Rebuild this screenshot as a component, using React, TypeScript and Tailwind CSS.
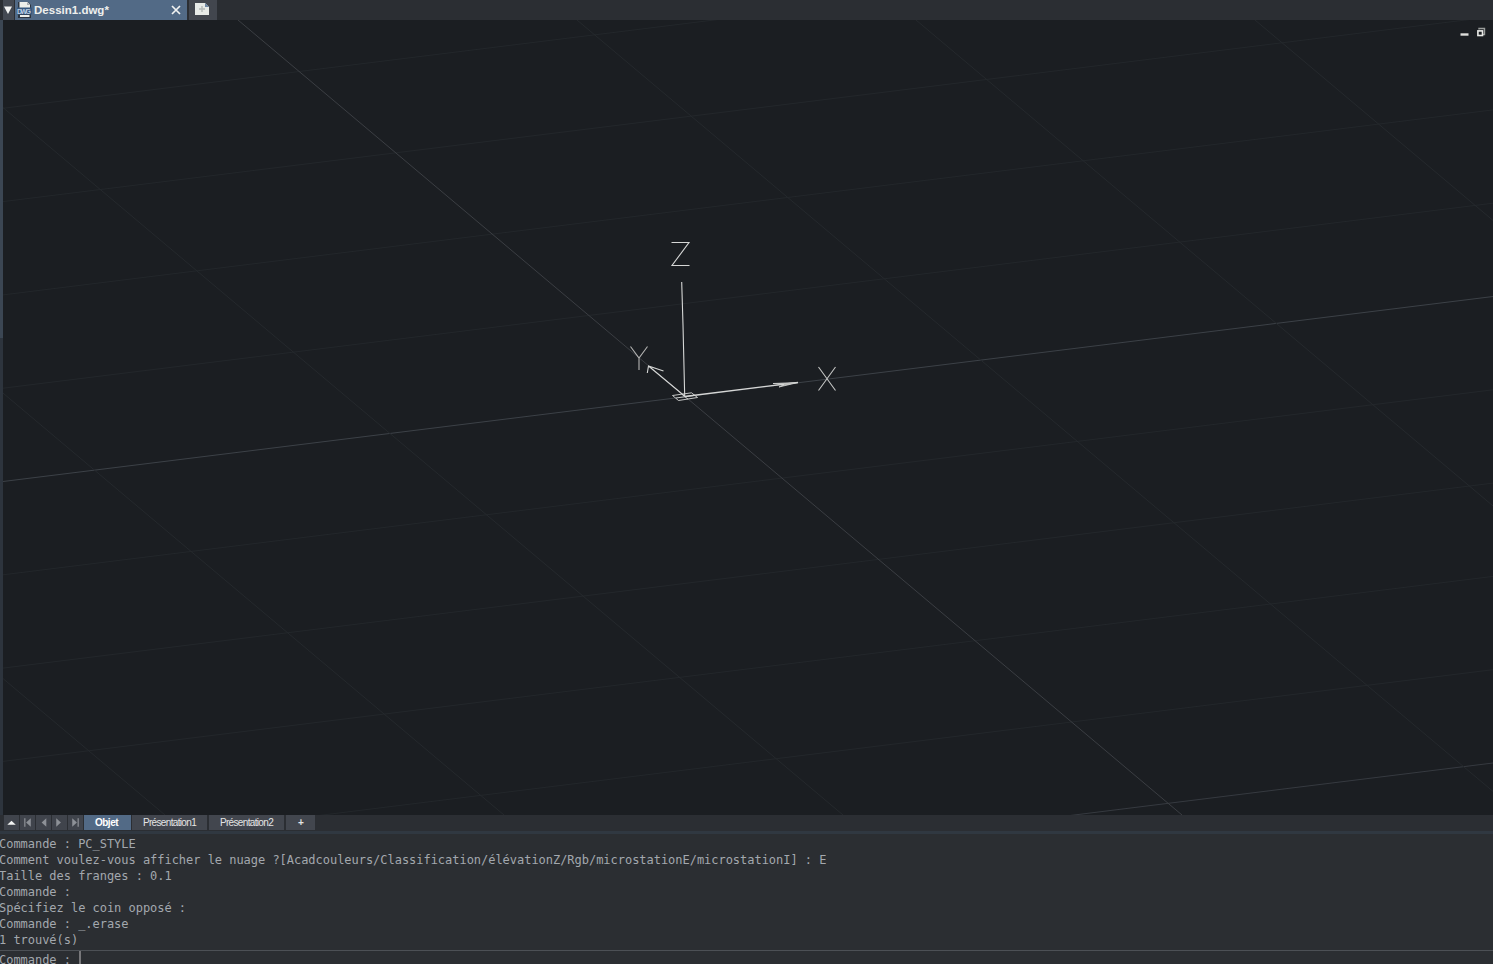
const VIEW_W = 1490;
const VIEW_H = 795;

// Grid rows: y at the left and at the right edge of the viewport.
const rows = [-6, -5, -4, -3, -2, -1, 0, 1, 2, 3, 4, 5].map((n) => ({
  n,
  y1: 461.5 + n * 93.3,
  y2: 276.5 + n * 93.3,
}));

// Grid columns: x at the top and at the bottom edge of the viewport.
const columns = [-3, -2, -1, 0, 1, 2, 3].map((n) => ({
  n,
  x1: 235 + n * 339,
  x2: 1179 + n * 339,
}));

function DrawingView() {
  return (
    <svg className="block h-[795px] w-[1490px] shrink-0 bg-[#1b1e22]" viewBox={`0 0 ${VIEW_W} ${VIEW_H}`} fill="none">
      {rows.map((r) => (
        <line key={r.n} x1={0} y1={r.y1} x2={VIEW_W} y2={r.y2} stroke={r.n === 0 ? '#3c4147' : r.n === 5 ? '#363a40' : '#23272b'} />
      ))}
      {columns.map((c) => (
        <line key={c.n} x1={c.x1} y1={0} x2={c.x2} y2={VIEW_H} stroke={c.n === 0 ? '#3b3e43' : '#25292d'} />
      ))}
      <g transform="translate(-3 -20)" stroke="#d6d7d6" strokeWidth="1.1">
        <path d="M671.5 242.5H689L672 265.5H689.5" />
        <path d="M630.5 346.5L639 358L647.5 346.5M639 358V370" stroke="#b3b3b2" />
        <path d="M818.5 367L835.5 390.5M835.5 367L818.5 390.5" stroke="#c4c5c4" />
        <path d="M681.7 282L683 325L684.7 396" />
        <path d="M684.5 396.5L798 382.5" strokeWidth="1.3" />
        <path d="M798 382.5L773 383.5L784 384.5L779 387Z" fill="#b8b9b8" strokeWidth=".8" />
        <path d="M684.5 396L648.5 366M663.5 371L648.5 366L647.3 373" />
        <path d="M672.5 395.5L691.5 392.8L697.5 397.5L678.5 400.5ZM676 398L695 395.3M682 394.3L688 399.2" strokeWidth=".9" />
      </g>
      <path d="M1457.5 14.5h8" stroke="#dedfdc" strokeWidth="2.4" />
      <path d="M1476 9.500v-1h5.500v6h-2" stroke="#9b9e9c" strokeWidth="1.4" />
      <rect x="1474.9" y="10.9" width="4.6" height="4.6" stroke="#e9eae7" strokeWidth="1.6" />
    </svg>
  );
}

function FileTabs() {
  return (
    <div className="flex h-[20px] w-full shrink-0 bg-[#2b2e33] pl-[3px]">
      <div className="flex w-[11px] items-center bg-[#444952] pl-px">
        <svg className="h-[8px] w-[8px]" viewBox="0 0 8 8">
          <path d="M0 .5h8L4 8z" fill="#f2f3f2" />
        </svg>
      </div>
      <div className="ml-px flex w-[172px] items-center bg-[#526a86]">
        <svg className="ml-px h-[18px] w-[17px]" viewBox="0 0 17 18">
          <path d="M2 1h10l3 3v13H2z" fill="#2d3540" />
          <path d="M3.500 1h8l2.500 2.500V7H3.500z" fill="#eceeea" />
          <path d="M4 14h9.500v2H4z" fill="#eceeea" />
          <path d="M11 1v3h3z" fill="#a9aeb3" />
          <rect x="1" y="6.5" width="15" height="7" fill="#37587f" />
          <text x="1" y="12.500" fontSize="7" fontWeight="700" fontFamily="Liberation Sans, sans-serif" fill="#b7cbe0" textLength="14">DWG</text>
        </svg>
        <span className="ml-px text-[11.5px] leading-[18px] font-bold tracking-[0.01px] whitespace-nowrap text-[#eeefed]">Dessin1.dwg*</span>
        <svg className="mr-[6px] ml-auto h-[10px] w-[10px]" viewBox="0 0 10 10">
          <path d="M1 1l8 8M9 1L1 9" stroke="#f2f3f2" strokeWidth="1.7" />
        </svg>
      </div>
      <div className="ml-[2px] flex w-[28px] items-center justify-center bg-[#42464e]">
        <svg className="mr-[3px] mb-[2px] h-[12px] w-[16px]" viewBox="0 0 16 12">
          <path d="M1 0h10l4 4v8H1z" fill="#e7eae7" />
          <path d="M11 0v4h4z" fill="#6d86a3" />
          <path d="M8 3v6M5 6h6" stroke="#b3b8b7" strokeWidth="1.4" />
        </svg>
      </div>
    </div>
  );
}

const navButtons = [
  { name: 'up', d: 'M3 10.500h9L7.500 6z', color: '#f2f3f2' },
  { name: 'first', d: 'M4 3.500h1.300v9H4zM11 3.500v9L6 8z', color: '#8d9197' },
  { name: 'previous', d: 'M10.500 3.500v9L5.500 8z', color: '#8d9197' },
  { name: 'next', d: 'M4 3.500v9L9 8z', color: '#8d9197' },
  { name: 'last', d: 'M4 3.500v9L9 8zM9.700 3.500H11v9H9.700z', color: '#8d9197' },
];

function LayoutTabs() {
  return (
    <div className="flex h-[16px] w-full shrink-0 items-stretch gap-px bg-[#2b2e33] pb-px pl-[4px] text-[10px] leading-[15px] tracking-[-0.66px] text-[#e4e5e4]">
      {navButtons.map((b) => (
        <div key={b.name} className="w-[15px] bg-[#40444c]">
          <svg className="block h-[15px] w-[15px]" viewBox="0 0 15 16">
            <path d={b.d} fill={b.color} />
          </svg>
        </div>
      ))}
      <div className="w-[47px] bg-[#526a86] pr-[2px] text-center font-bold tracking-[-0.5px] text-white">Objet</div>
      <div className="w-[75px] bg-[#42464e] text-center">Présentation1</div>
      <div className="ml-px w-[75px] bg-[#42464e] text-center">Présentation2</div>
      <div className="ml-px w-[29px] bg-[#42464e] text-center font-bold">+</div>
    </div>
  );
}

const history = [
  'Commande : PC_STYLE',
  'Comment voulez-vous afficher le nuage ?[Acadcouleurs/Classification/élévationZ/Rgb/microstationE/microstationI] : E',
  'Taille des franges : 0.1',
  'Commande :',
  'Spécifiez le coin opposé :',
  'Commande : _.erase',
  '1 trouvé(s)',
];

function CommandLine() {
  return (
    <div className="flex flex-1 flex-col overflow-hidden bg-[#2b2e32] font-['DejaVu_Sans_Mono',monospace] text-[12px] leading-[16px] tracking-[-0.03px] text-[#a3a8ae]">
      <div className="-ml-px h-[116px] shrink-0 pt-[2px]">
        {history.map((line, i) => (
          <div key={i} className="h-[16px] whitespace-pre">{line}</div>
        ))}
      </div>
      <div className="flex h-[14px] shrink-0 border-t border-[#4c5055]">
        <span className="-ml-px w-[80px] pt-px whitespace-pre">Commande :</span>
        <span className="h-[13px] w-[2px] bg-[#77777a]" />
      </div>
    </div>
  );
}

export default function App() {
  return (
    <div className="flex h-[964px] w-[1493px] flex-col overflow-hidden bg-[#2b2e32] font-['Liberation_Sans',Arial,sans-serif]">
      <FileTabs />
      <div className="flex h-[795px] shrink-0">
        <div className="flex w-[3px] flex-col">
          <div className="h-[318px] bg-[#3b4653]" />
          <div className="flex-1 bg-[#2d343d]" />
        </div>
        <DrawingView />
      </div>
      <LayoutTabs />
      <div className="h-[3px] shrink-0 bg-[#303841]" />
      <CommandLine />
    </div>
  );
}
